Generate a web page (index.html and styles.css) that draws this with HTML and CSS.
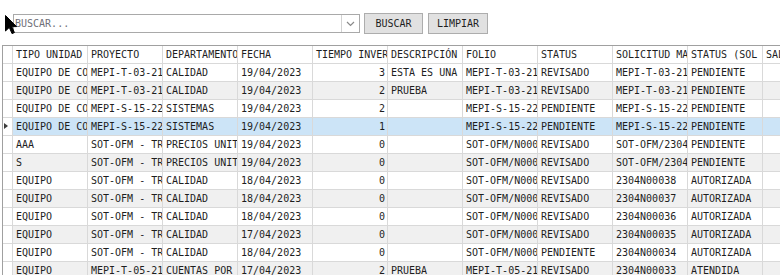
FILE: index.html
```html
<!DOCTYPE html>
<html lang="es">
<head>
<meta charset="utf-8">
<title>Solicitudes</title>
<link rel="stylesheet" href="styles.css">
</head>
<body>
<div class="page">
  <div class="toolbar">
    <div class="combo">
      <span class="placeholder">BUSCAR...</span>
      <span class="drop"><svg width="9" height="6" viewBox="0 0 9 6"><polyline points="1,1 4.5,4.5 8,1" fill="none" stroke="#8a8a8a" stroke-width="1.2"/></svg></span>
    </div>
    <button class="btn btn-buscar">BUSCAR</button>
    <button class="btn btn-limpiar">LIMPIAR</button>
  </div>
  <div class="gridwrap">
    <div class="grid">
      <div class="row head">
        <div class="rh"></div>
        <div class="c">TIPO UNIDAD</div><div class="c">PROYECTO</div><div class="c">DEPARTAMENTO</div><div class="c">FECHA</div><div class="c">TIEMPO INVERTIDO</div><div class="c">DESCRIPCIÓN</div><div class="c">FOLIO</div><div class="c">STATUS</div><div class="c">SOLICITUD MATERIAL</div><div class="c">STATUS (SOL MAT)</div><div class="c">SALIDA</div>
      </div>
      <div class="row">
        <div class="rh"></div>
        <div class="c">EQUIPO DE COMPUTO</div><div class="c">MEPI-T-03-21 CALIDAD</div><div class="c">CALIDAD</div><div class="c">19/04/2023</div><div class="c n">3</div><div class="c">ESTA ES UNA PRUEBA</div><div class="c">MEPI-T-03-21</div><div class="c">REVISADO</div><div class="c">MEPI-T-03-21</div><div class="c">PENDIENTE</div><div class="c"></div>
      </div>
      <div class="row alt">
        <div class="rh"></div>
        <div class="c">EQUIPO DE COMPUTO</div><div class="c">MEPI-T-03-21 CALIDAD</div><div class="c">CALIDAD</div><div class="c">19/04/2023</div><div class="c n">2</div><div class="c">PRUEBA</div><div class="c">MEPI-T-03-21</div><div class="c">REVISADO</div><div class="c">MEPI-T-03-21</div><div class="c">PENDIENTE</div><div class="c"></div>
      </div>
      <div class="row">
        <div class="rh"></div>
        <div class="c">EQUIPO DE COMPUTO</div><div class="c">MEPI-S-15-22 SISTEMAS</div><div class="c">SISTEMAS</div><div class="c">19/04/2023</div><div class="c n">2</div><div class="c"></div><div class="c">MEPI-S-15-22</div><div class="c">PENDIENTE</div><div class="c">MEPI-S-15-22</div><div class="c">PENDIENTE</div><div class="c"></div>
      </div>
      <div class="row sel">
        <div class="rh"><span class="arrow"></span></div>
        <div class="c">EQUIPO DE COMPUTO</div><div class="c">MEPI-S-15-22 SISTEMAS</div><div class="c">SISTEMAS</div><div class="c">19/04/2023</div><div class="c n">1</div><div class="c"></div><div class="c">MEPI-S-15-22</div><div class="c">PENDIENTE</div><div class="c">MEPI-S-15-22</div><div class="c">PENDIENTE</div><div class="c"></div>
      </div>
      <div class="row">
        <div class="rh"></div>
        <div class="c">AAA</div><div class="c">SOT-OFM - TRABAJOS</div><div class="c">PRECIOS UNITARIOS</div><div class="c">19/04/2023</div><div class="c n">0</div><div class="c"></div><div class="c">SOT-OFM/N0006</div><div class="c">REVISADO</div><div class="c">SOT-OFM/2304N00040</div><div class="c">PENDIENTE</div><div class="c"></div>
      </div>
      <div class="row alt">
        <div class="rh"></div>
        <div class="c">S</div><div class="c">SOT-OFM - TRABAJOS</div><div class="c">PRECIOS UNITARIOS</div><div class="c">19/04/2023</div><div class="c n">0</div><div class="c"></div><div class="c">SOT-OFM/N0006</div><div class="c">REVISADO</div><div class="c">SOT-OFM/2304N00039</div><div class="c">PENDIENTE</div><div class="c"></div>
      </div>
      <div class="row">
        <div class="rh"></div>
        <div class="c">EQUIPO</div><div class="c">SOT-OFM - TRABAJOS</div><div class="c">CALIDAD</div><div class="c">18/04/2023</div><div class="c n">0</div><div class="c"></div><div class="c">SOT-OFM/N0006</div><div class="c">REVISADO</div><div class="c">2304N00038</div><div class="c">AUTORIZADA</div><div class="c"></div>
      </div>
      <div class="row alt">
        <div class="rh"></div>
        <div class="c">EQUIPO</div><div class="c">SOT-OFM - TRABAJOS</div><div class="c">CALIDAD</div><div class="c">18/04/2023</div><div class="c n">0</div><div class="c"></div><div class="c">SOT-OFM/N0006</div><div class="c">REVISADO</div><div class="c">2304N00037</div><div class="c">AUTORIZADA</div><div class="c"></div>
      </div>
      <div class="row">
        <div class="rh"></div>
        <div class="c">EQUIPO</div><div class="c">SOT-OFM - TRABAJOS</div><div class="c">CALIDAD</div><div class="c">18/04/2023</div><div class="c n">0</div><div class="c"></div><div class="c">SOT-OFM/N0006</div><div class="c">REVISADO</div><div class="c">2304N00036</div><div class="c">AUTORIZADA</div><div class="c"></div>
      </div>
      <div class="row alt">
        <div class="rh"></div>
        <div class="c">EQUIPO</div><div class="c">SOT-OFM - TRABAJOS</div><div class="c">CALIDAD</div><div class="c">17/04/2023</div><div class="c n">0</div><div class="c"></div><div class="c">SOT-OFM/N0006</div><div class="c">REVISADO</div><div class="c">2304N00035</div><div class="c">AUTORIZADA</div><div class="c"></div>
      </div>
      <div class="row">
        <div class="rh"></div>
        <div class="c">EQUIPO</div><div class="c">SOT-OFM - TRABAJOS</div><div class="c">CALIDAD</div><div class="c">18/04/2023</div><div class="c n">0</div><div class="c"></div><div class="c">SOT-OFM/N0006</div><div class="c">PENDIENTE</div><div class="c">2304N00034</div><div class="c">AUTORIZADA</div><div class="c"></div>
      </div>
      <div class="row alt">
        <div class="rh"></div>
        <div class="c">EQUIPO</div><div class="c">MEPI-T-05-21 CUENTAS</div><div class="c">CUENTAS POR PAGAR</div><div class="c">17/04/2023</div><div class="c n">2</div><div class="c">PRUEBA</div><div class="c">MEPI-T-05-21</div><div class="c">REVISADO</div><div class="c">2304N00033</div><div class="c">ATENDIDA</div><div class="c"></div>
      </div>
    </div>
  </div>
  <svg class="cursor" width="12" height="20" viewBox="0 0 12 20"><polygon points="0.5,0.5 0.5,16 4.3,12.4 7,18.6 9.4,17.6 6.8,11.6 11.5,11.6" fill="#000" stroke="#000" stroke-width="1" stroke-linejoin="miter"/></svg>
</div>
</body>
</html>
```
FILE: styles.css
```css
html, body {
  margin: 0;
  padding: 0;
  overflow: hidden;
  background: #ffffff;
}
.page {
  position: relative;
  width: 780px;
  height: 275px;
  overflow: hidden;
  font-family: "DejaVu Sans Mono", "Liberation Mono", monospace;
  font-size: 10px;
  color: #1e1e1e;
}
.toolbar {
  display: flex;
  align-items: flex-start;
  padding: 13px 0 0 13px;
  height: 32px;
  box-sizing: border-box;
}
.combo {
  margin-top: 1px;
  width: 347px;
  height: 19px;
  box-sizing: border-box;
  border: 1px solid #a9a9a9;
  display: flex;
  align-items: center;
  background: #fff;
}
.placeholder {
  flex: 1;
  padding-left: 1px;
  color: #6f7078;
  line-height: 17px;
}
.drop {
  width: 18px;
  height: 17px;
  border-left: 1px solid #d2d2d2;
  display: flex;
  align-items: center;
  justify-content: center;
  box-sizing: border-box;
}
.btn {
  margin: 0 0 0 4px;
  height: 21px;
  box-sizing: border-box;
  border: 1px solid #adadad;
  background: #e1e1e1;
  font-family: "DejaVu Sans Mono", "Liberation Mono", monospace;
  font-size: 10px;
  color: #1e1e1e;
  padding: 0;
}
.btn-buscar { width: 59px; }
.btn-limpiar { width: 60px; margin-left: 5px; }
.gridwrap {
  margin-top: 13px;
  margin-left: 2px;
}
.grid {
  border-left: 1px solid #a0a0a0;
  border-top: 1px solid #a0a0a0;
  width: 840px;
}
.row {
  display: grid;
  grid-template-columns: 10px repeat(11, 75px);
  height: 18px;
}
.rh, .c {
  box-sizing: border-box;
  height: 18px;
  border-right: 1px solid #d9d9d9;
  border-bottom: 1px solid #d9d9d9;
  background: #ffffff;
}
.c {
  padding-left: 3px;
  line-height: 17px;
  white-space: nowrap;
  overflow: hidden;
}
.c.n {
  text-align: right;
  padding-right: 2px;
}
.row.alt .c { background: #f0f0f0; }
.row.sel .c { background: #cce4f7; }
.rh {
  position: relative;
}
.arrow {
  position: absolute;
  left: 1px;
  top: 5px;
  width: 0;
  height: 0;
  border-left: 4px solid #3c3c3c;
  border-top: 3.5px solid transparent;
  border-bottom: 3.5px solid transparent;
}
.cursor {
  position: absolute;
  left: 5px;
  top: 15px;
}
```
